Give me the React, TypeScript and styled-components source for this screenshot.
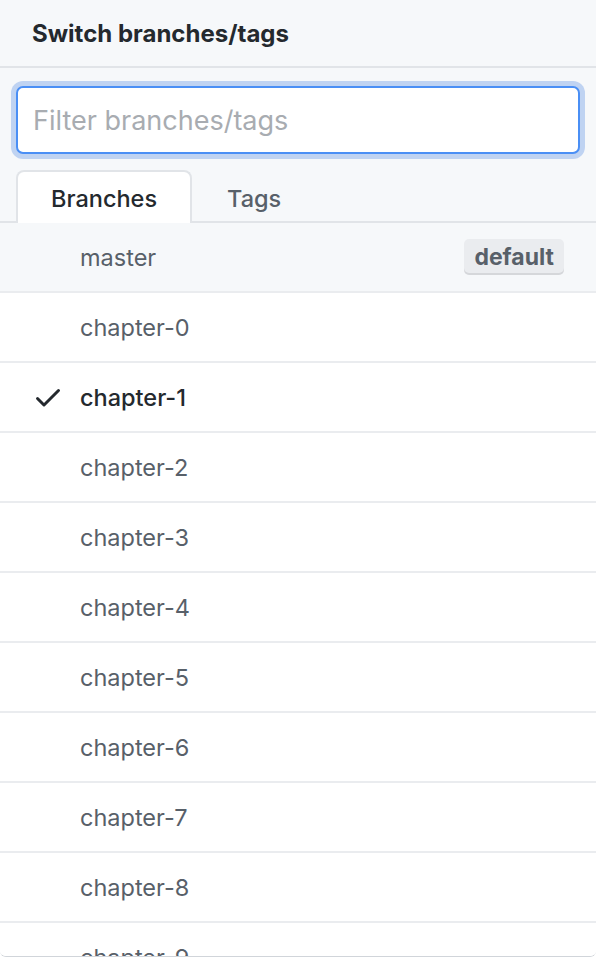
import React from 'react';
import styled, { createGlobalStyle } from 'styled-components';

const GlobalStyle = createGlobalStyle`
    html, body {
        margin: 0;
        padding: 0;
        background: #ffffff;
    }
    body {
        font-family: Inter, "Liberation Sans", Arial, sans-serif;
        -webkit-font-smoothing: antialiased;
    }
`;

const branches = ['master', 'chapter-0', 'chapter-1', 'chapter-2', 'chapter-3', 'chapter-4', 'chapter-5', 'chapter-6', 'chapter-7', 'chapter-8', 'chapter-9'];

const CheckIcon = () => (
    <svg width="32" height="32" viewBox="0 0 16 16" fill="#24292e">
        <path d="M13.78 4.22a.75.75 0 010 1.06l-7.25 7.25a.75.75 0 01-1.06 0L2.22 9.28a.75.75 0 011.06-1.06L6 10.94l6.72-6.72a.75.75 0 011.06 0z" />
    </svg>
);

const App = () => {
    const current = 'chapter-1';

    return (
        <Menu>
            <GlobalStyle />
            <Header>
                <span>Switch branches/tags</span>
            </Header>
            <FilterBox>
                <input className="filter_input" type="text" placeholder="Filter branches/tags" />
            </FilterBox>
            <Tabs>
                <Tab active>Branches</Tab>
                <Tab>Tags</Tab>
            </Tabs>
            <List>
                {branches.map((name, index) => (
                    <Item key={name} highlighted={index === 0} selected={name === current}>
                        <div className="check">{name === current && <CheckIcon />}</div>
                        <span className="branch_name">{name}</span>
                        {index === 0 && <Label>default</Label>}
                    </Item>
                ))}
            </List>
        </Menu>
    );
};

export default App;

const Menu = styled.div`
    width: 596px;
    height: 957px;
    display: flex;
    flex-direction: column;
    overflow: hidden;
    background: #ffffff;
    border-bottom: 1px solid #d1d5da;
    border-radius: 0 0 6px 6px;
    box-sizing: border-box;
`;

const Header = styled.div`
    display: flex;
    align-items: center;
    height: 68px;
    flex-shrink: 0;
    padding: 0 32px;
    background: #f6f8fa;
    border-bottom: 2px solid #e1e4e8;
    box-sizing: border-box;

    span {
        font-size: 24px;
        font-weight: 700;
        color: #24292e;
    }
`;

const FilterBox = styled.div`
    flex-shrink: 0;
    padding: 18px 16px 16px;
    background: #f6f8fa;

    .filter_input {
        display: block;
        width: 100%;
        height: 68px;
        box-sizing: border-box;
        padding: 0 15px;
        border: 2px solid #4a8ff5;
        border-radius: 7px;
        box-shadow: 0 0 0 5px #bfd3f2;
        outline: none;
        background: #ffffff;
        font-family: Inter, "Liberation Sans", Arial, sans-serif;
        font-size: 27px;
        color: #24292e;

        &::placeholder {
            color: #a8acb1;
        }
    }
`;

const Tabs = styled.div`
    display: flex;
    flex-shrink: 0;
    height: 53px;
    padding: 0 16px;
    background: #f6f8fa;
    border-bottom: 2px solid #e1e4e8;
    box-sizing: border-box;
`;

const Tab = styled.div<{ active?: boolean }>`
    display: flex;
    align-items: center;
    height: 53px;
    box-sizing: border-box;
    padding: 2px 33px 0;
    font-size: 23.5px;
    font-weight: 500;
    color: ${p => (p.active ? '#24292e' : '#586069')};
    background: ${p => (p.active ? '#ffffff' : 'transparent')};
    border: 2px solid ${p => (p.active ? '#e1e4e8' : 'transparent')};
    border-bottom: none;
    border-radius: 8px 8px 0 0;
`;

const List = styled.div`
    display: flex;
    flex-direction: column;
`;

const Item = styled.div<{ highlighted?: boolean; selected?: boolean }>`
    display: flex;
    align-items: center;
    flex-shrink: 0;
    height: 70px;
    box-sizing: border-box;
    padding: 0 32px;
    background: ${p => (p.highlighted ? '#f6f8fa' : '#ffffff')};
    border-bottom: 2px solid #eaecef;

    .check {
        display: flex;
        align-items: center;
        width: 32px;
        height: 32px;
        margin-right: 16px;
    }

    .branch_name {
        flex: 1;
        font-size: 23.5px;
        color: ${p => (p.selected ? '#24292e' : '#586069')};
        font-weight: ${p => (p.selected ? 500 : 400)};
    }
`;

const Label = styled.span`
    display: inline-flex;
    align-items: center;
    height: 36px;
    padding: 0 10px;
    border-radius: 5px;
    background: #eaecef;
    box-shadow: inset 0 -2px 0 rgba(27, 31, 35, 0.1);
    font-size: 23px;
    font-weight: 700;
    color: #586069;
`;
